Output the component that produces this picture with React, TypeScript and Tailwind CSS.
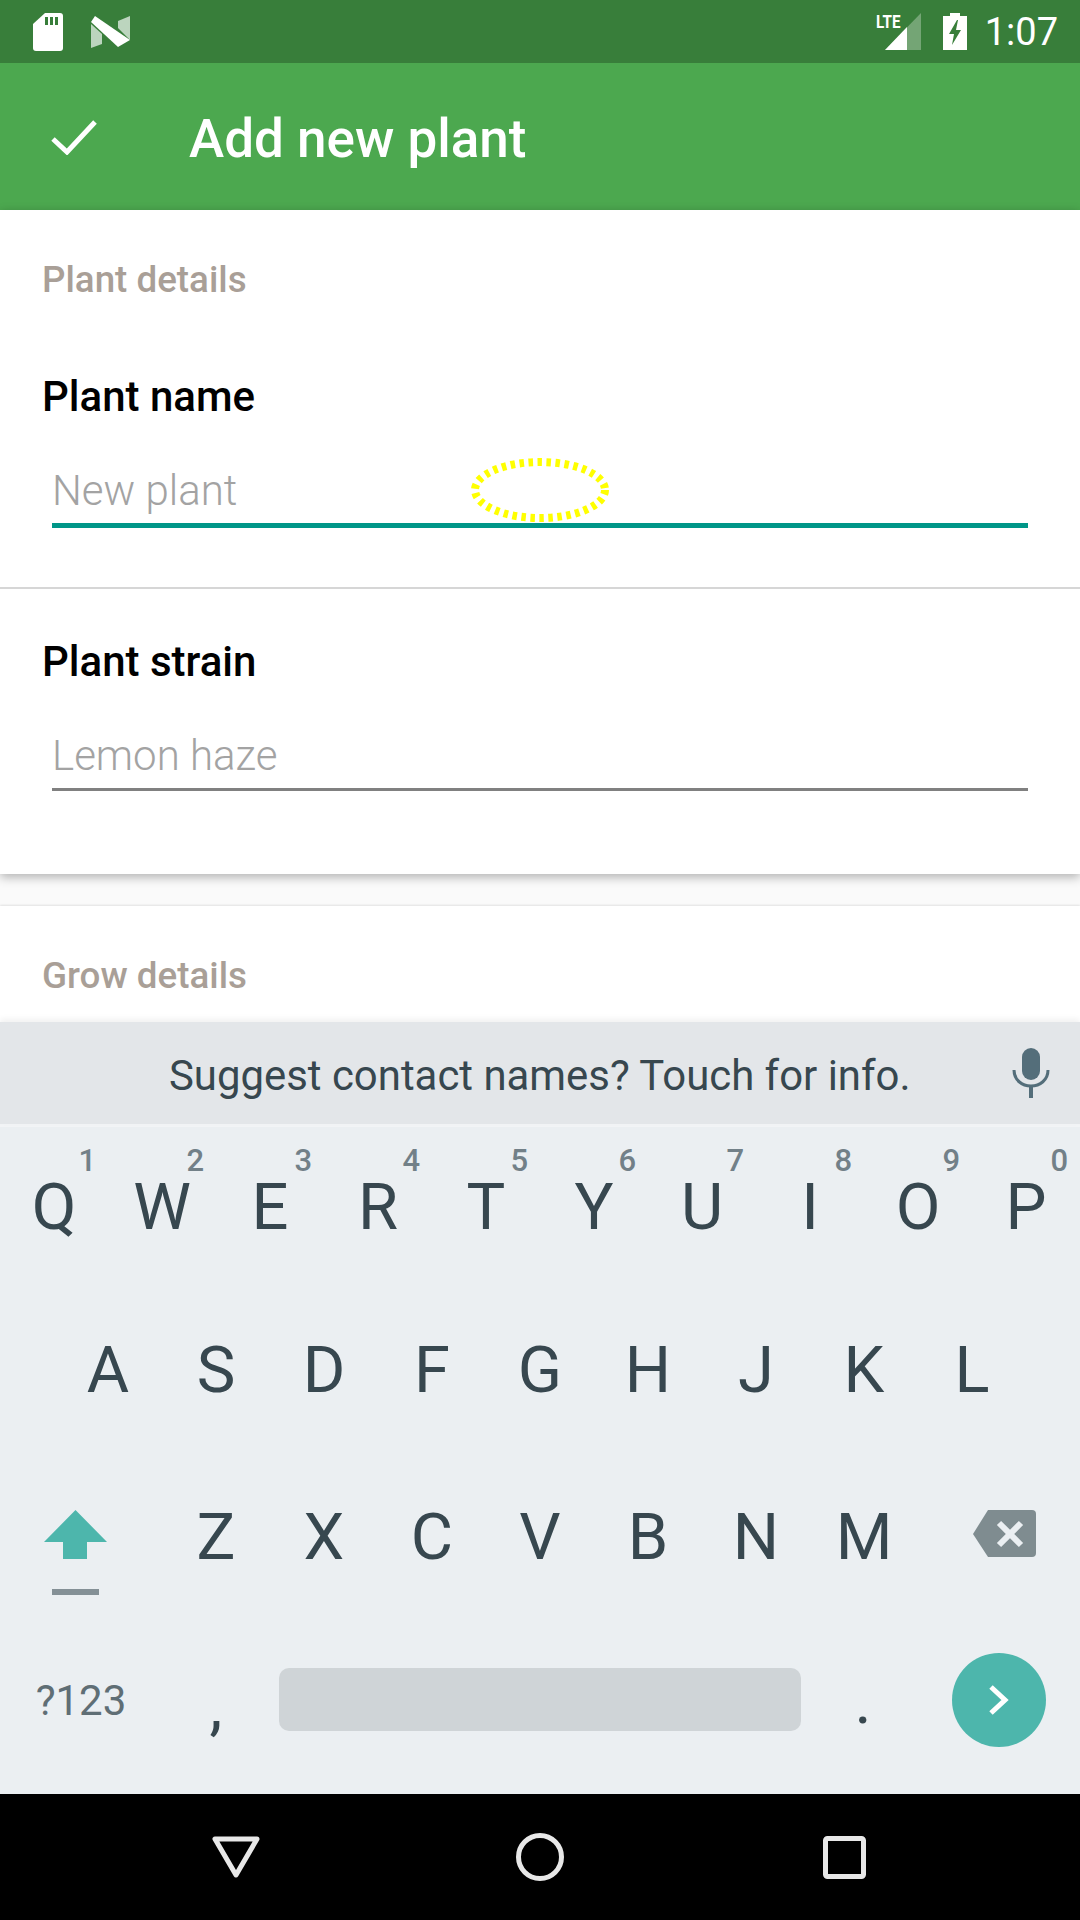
const topRow = [
  ["Q", "1"],
  ["W", "2"],
  ["E", "3"],
  ["R", "4"],
  ["T", "5"],
  ["Y", "6"],
  ["U", "7"],
  ["I", "8"],
  ["O", "9"],
  ["P", "0"],
];
const midRow = ["A", "S", "D", "F", "G", "H", "J", "K", "L"];
const lowRow = ["Z", "X", "C", "V", "B", "N", "M"];

function Key({ label, hint }: { label: string; hint?: string }) {
  return (
    <div className="relative flex h-full w-[108px] items-center justify-center text-[65px] leading-none text-[#37474f]">
      {label}
      {hint && (
        <span className="absolute right-[12px] top-[18px] text-[31px] font-medium leading-none text-[#728088]">{hint}</span>
      )}
    </div>
  );
}

function StatusBar() {
  return (
    <div className="flex h-[63px] items-center bg-[#387e3a] pl-[33px] pr-[22px]">
      <svg width="30" height="38" viewBox="0 0 30 38" className="mr-[28px]">
        <path
          d="M12 0h15a3 3 0 0 1 3 3v32a3 3 0 0 1-3 3H3a3 3 0 0 1-3-3V11z"
          fill="#fff"
        />
        <path d="M12 4h3v8h-3zM17 4h3v8h-3zM22 4h3v8h-3z" fill="#387e3a" />
      </svg>
      <svg width="39" height="32" viewBox="0 0 39 32">
        <path d="M0 8l11 10v10L0 32z" fill="#bcd5be" />
        <path d="M39 0v24L27 12V5z" fill="#bcd5be" />
        <path d="M4 0l35 24-12 7L0 6z" fill="#fff" />
      </svg>
      <div className="relative ml-auto mr-[22px] h-[37px] w-[36px]">
        <svg width="36" height="37" viewBox="0 0 36 37">
          <path d="M36 0v37H0z" fill="#fff" fillOpacity="0.3" />
          <path d="M22 14v23H0z" fill="#fff" />
        </svg>
        <span className="absolute left-[-12px] top-[0px] text-[19px] font-bold leading-[18px] text-white [transform:scaleX(0.8)]">LTE</span>
      </div>
      <svg width="24" height="37" viewBox="0 0 24 37" className="mr-[18px]">
        <path d="M7 0h10v3h7v34H0V3h7z" fill="#fff" />
        <path d="M14 7L6 21h5l-2 11 9-15h-5l2-10z" fill="#387e3a" />
      </svg>
      <span className="text-[38px] leading-none text-white">1:07</span>
    </div>
  );
}

function Field({ label, placeholder, active }: { label: string; placeholder: string; active?: boolean }) {
  return (
    <div className="pl-[42px] pr-[43px]">
      <div className="h-[50px] pt-[1px] text-[42px] font-medium leading-[50px] text-black">{label}</div>
      <div
        className={
          active
            ? "ml-[10px] mr-[9px] mt-[44px] h-[63px] border-b-[5px] border-[#009688]"
            : "ml-[10px] mr-[9px] mt-[44px] h-[61px] border-b-[3px] border-[#808080]"
        }
      >
        <div className="pt-[1px] text-[42px] font-light leading-[50px] text-[#a3a3a3]">{placeholder}</div>
      </div>
    </div>
  );
}

export default function App() {
  return (
    <div className="flex h-[1920px] w-[1080px] flex-col overflow-hidden bg-[#fafafa] font-['Roboto',sans-serif]">
      <StatusBar />
      <div className="flex h-[147px] items-center bg-[#4ca84f]">
        <svg width="46" height="36" viewBox="0 0 46 36" className="ml-[51px]">
          <path d="M2 20l14 13L44 3" fill="none" stroke="#fff" strokeWidth="5" />
        </svg>
        <span className="ml-[92px] pt-[5px] text-[53px] font-medium leading-none text-white">Add new plant</span>
      </div>

      <div className="relative z-10 h-[664px] bg-white shadow-[0_3px_10px_rgba(0,0,0,0.3)]">
        <div className="h-[379px] border-b-[2px] border-[#d6d6d6]">
          <div className="px-[42px] pt-[45px] text-[36.75px] font-medium leading-[50px] text-[#a99f97]">Plant details</div>
          <div className="mt-[66px]">
            <Field label="Plant name" placeholder="New plant" active />
          </div>
        </div>
        <div className="pt-[47px]">
          <Field label="Plant strain" placeholder="Lemon haze" />
        </div>
        <svg width="140" height="66" viewBox="0 0 140 66" className="absolute left-[470px] top-[247px]">
          <ellipse
            cx="70"
            cy="33"
            rx="65"
            ry="28"
            fill="none"
            stroke="#ffff00"
            strokeWidth="8"
            strokeDasharray="4.5 4.5"
          />
        </svg>
      </div>

      <div className="mt-[32px] h-[116px] bg-white shadow-[0_-1px_2px_rgba(0,0,0,0.1)]">
        <div className="px-[42px] pt-[45px] text-[36.75px] font-medium leading-[50px] text-[#a99f97]">Grow details</div>
      </div>

      <div className="relative z-10 flex h-[102px] items-center bg-[#e3e6e9] shadow-[0_-3px_6px_rgba(0,0,0,0.06)]">
        <span className="ml-[169px] pt-[6px] text-[41.9px] leading-none text-[#37474f]">Suggest contact names? Touch for info.</span>
        <svg width="38" height="50" viewBox="0 0 38 50" className="ml-auto mr-[30px]">
          <rect x="10" y="0" width="18" height="32" rx="9" fill="#546e7a" />
          <path d="M2 22c0 10 8 16 17 16s17-6 17-16" fill="none" stroke="#546e7a" strokeWidth="3" />
          <path d="M19 38v12" stroke="#546e7a" strokeWidth="4" />
        </svg>
      </div>

      <div className="flex flex-1 flex-col border-t-[3px] border-[#f2f4f6] bg-[#ebeff2]">
        <div className="flex h-[160px]">
          {topRow.map(([k, n]) => (
            <Key key={k} label={k} hint={n} />
          ))}
        </div>
        <div className="flex h-[167px] pl-[54px]">
          {midRow.map((k) => (
            <Key key={k} label={k} />
          ))}
        </div>
        <div className="flex h-[166px]">
          <div className="flex w-[162px] flex-col items-center pr-[12px] pt-[56px]">
            <svg width="63" height="49" viewBox="0 0 63 49">
              <path d="M31.5 0L63 32H43v17H19V32H0z" fill="#4db6ac" />
            </svg>
            <div className="mt-[30px] h-[6px] w-[47px] bg-[#849096]" />
          </div>
          {lowRow.map((k) => (
            <Key key={k} label={k} />
          ))}
          <div className="flex w-[162px] items-center justify-center pb-[8px] pl-[11px]">
            <svg width="63" height="47" viewBox="0 0 63 47">
              <path d="M15 0h44a4 4 0 0 1 4 4v39a4 4 0 0 1-4 4H15L0 24z" fill="#7f8c90" />
              <path d="M26 13l22 22M48 13L26 35" stroke="#ebeff2" strokeWidth="6" />
            </svg>
          </div>
        </div>
        <div className="flex flex-1 items-center pb-[15px]">
          <div className="flex w-[162px] items-center justify-center pt-[2px] text-[42px] leading-none text-[#5f6e75]">?123</div>
          <div className="mt-[14px] h-[100px] w-[108px]">
            <Key label="," />
          </div>
          <div className="ml-[9px] h-[63px] w-[522px] rounded-[10px] bg-[#cfd4d7]" />
          <div className="w-[124px] pt-[4px]">
            <div className="flex justify-center text-[65px] leading-none text-[#37474f]">.</div>
          </div>
          <div className="ml-[27px] flex h-[94px] w-[94px] items-center justify-center rounded-full bg-[#4db6ac]">
            <svg width="22" height="32" viewBox="0 0 22 32">
              <path d="M3 3l14 13L3 29" fill="none" stroke="#fff" strokeWidth="5" />
            </svg>
          </div>
        </div>
      </div>

      <div className="flex h-[126px] items-center bg-black pl-[212px]">
        <svg width="48" height="42" viewBox="0 0 48 42">
          <path d="M3 3h42L24 39z" fill="none" stroke="#e8e8e8" strokeWidth="5" strokeLinejoin="round" />
        </svg>
        <svg width="48" height="48" viewBox="0 0 48 48" className="ml-[256px]">
          <circle cx="24" cy="24" r="21.5" fill="none" stroke="#e8e8e8" strokeWidth="5" />
        </svg>
        <svg width="43" height="43" viewBox="0 0 43 43" className="ml-[259px]">
          <rect x="2.5" y="2.5" width="38" height="38" rx="2" fill="none" stroke="#e8e8e8" strokeWidth="5" />
        </svg>
      </div>
    </div>
  );
}
